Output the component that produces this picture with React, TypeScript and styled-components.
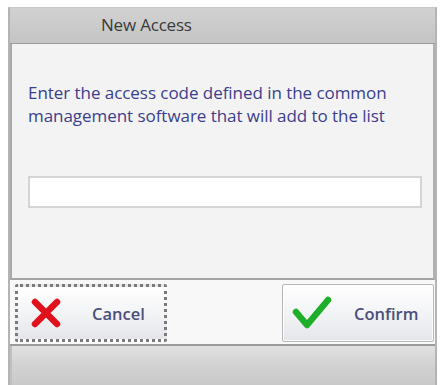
import React from "react";
import styled, { createGlobalStyle } from "styled-components";

const Global = createGlobalStyle`
  html, body { margin: 0; padding: 0; background: #ffffff; }
  body { font-family: "Open Sans", "Noto Sans", sans-serif; }
`;

const Window = styled.div`
  margin: 7px 0 0 8px;
  width: 429px;
  height: 378px;
  box-sizing: border-box;
  border-left: 2px solid #b4b4b4;
  border-right: 2px solid #b4b4b4;
  border-top: 1px solid #c8c8c8;
  background: #d6d6d6;
  display: flex;
  flex-direction: column;
`;

const TitleBar = styled.div`
  height: 36px;
  flex: none;
  box-sizing: border-box;
  background: linear-gradient(180deg, #d2d2d2 0%, #cbcbcb 50%, #c4c4c4 100%);
  display: flex;
  align-items: center;
  padding: 0 0 3px 91px;
  border-bottom: 1px solid #9c9c9c;
`;

const Title = styled.span`
  font-size: 17px;
  color: #3a3a3a;
  letter-spacing: -0.2px;
`;

const Content = styled.div`
  flex: none;
  height: 236px;
  box-sizing: border-box;
  background: #f3f3f3;
  border-left: 2px solid #a9a9a9;
  border-right: 2px solid #b0b0b0;
  border-bottom: 2px solid #a4a4a4;
  padding: 37px 11px 0 16px;
  display: flex;
  flex-direction: column;
`;

const Prompt = styled.p`
  margin: 0;
  font-size: 17px;
  line-height: 23px;
  color: #3b3e8c;
  letter-spacing: -0.05px;
`;

const CodeInput = styled.input`
  margin-top: 49px;
  height: 32px;
  box-sizing: border-box;
  width: 100%;
  background: #ffffff;
  border: 2px solid #d4d4d4;
  outline: none;
`;

const ButtonRow = styled.div`
  flex: none;
  height: 66px;
  box-sizing: border-box;
  background: #f8f8f8;
  border-bottom: 2px solid #9a9a9a;
  display: flex;
  justify-content: space-between;
  align-items: center;
  padding: 2px 1px 0 5px;
`;

const DialogButton = styled.button<{ $focused?: boolean }>`
  width: 152px;
  height: 58px;
  box-sizing: border-box;
  display: flex;
  align-items: center;
  padding: 0 0 0 ${(p) => (p.$focused ? "12px" : "9px")};
  gap: ${(p) => (p.$focused ? "30px" : "22px")};
  border: ${(p) => (p.$focused ? "3px dotted #7a7a7a" : "1px solid #b8b8b8")};
  border-radius: 2px;
  background: linear-gradient(180deg, #ffffff 0%, #f4f5f7 45%, #e4e6ea 100%);
  box-shadow: ${(p) => (p.$focused ? "none" : "inset 0 0 0 1px #fbfbfb")};
  font-family: "Open Sans", "Noto Sans", sans-serif;
  font-weight: 600;
  font-size: 16.5px;
  color: #4a4f7a;
  cursor: pointer;
`;

const StatusBar = styled.div`
  flex: 1;
  background: linear-gradient(180deg, #e2e2e2 0%, #d4d4d4 40%, #c9c9c9 100%);
  border-left: 2px solid #c0c0c0;
`;

const CrossIcon = () => (
  <svg width="32" height="32" viewBox="0 0 32 32">
    <path d="M5 5 L27 27 M27 5 L5 27" stroke="#e0101c" strokeWidth="6.5" strokeLinecap="round" />
  </svg>
);

const CheckIcon = () => (
  <svg width="40" height="34" viewBox="0 0 40 34">
    <path d="M4 16 L15 29 L36 4" fill="none" stroke="#1fae2a" strokeWidth="6.5" strokeLinecap="round" strokeLinejoin="round" />
  </svg>
);

export default function App() {
  return (
    <>
      <Global />
      <Window>
        <TitleBar>
          <Title>New Access</Title>
        </TitleBar>
        <Content>
          <Prompt>
            Enter the access code defined in the common
            <br />
            management software that will add to the list
          </Prompt>
          <CodeInput />
        </Content>
        <ButtonRow>
          <DialogButton $focused>
            <CrossIcon />
            Cancel
          </DialogButton>
          <DialogButton>
            <CheckIcon />
            Confirm
          </DialogButton>
        </ButtonRow>
        <StatusBar />
      </Window>
    </>
  );
}
